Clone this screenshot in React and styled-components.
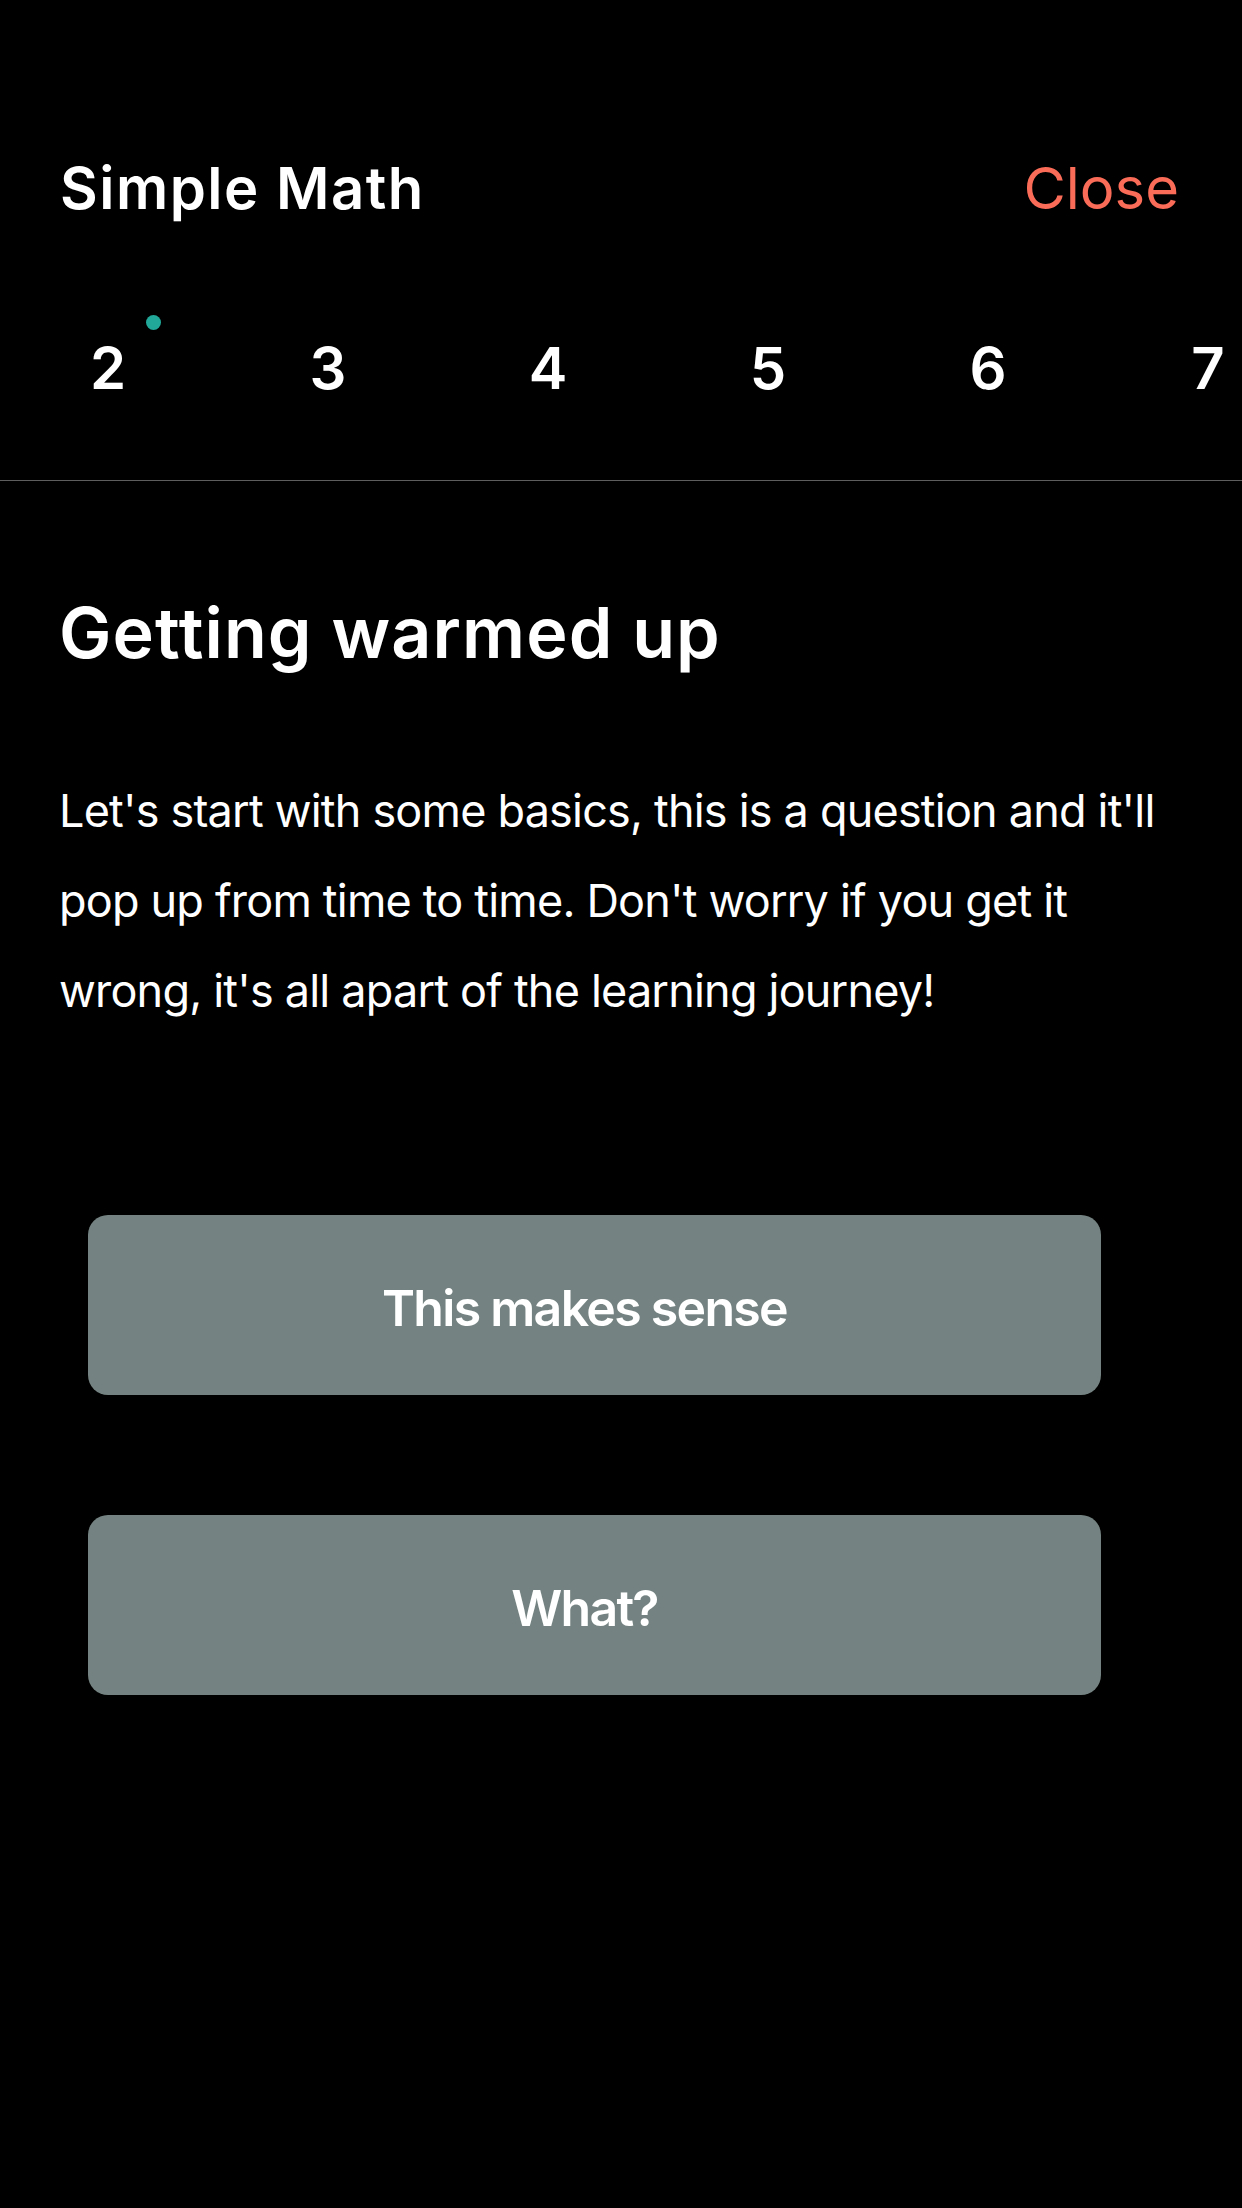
import React from "react";
import styled, { createGlobalStyle } from "styled-components";

const GlobalStyle = createGlobalStyle`
  body {
    margin: 0;
    background-color: #000000;
    font-family: Inter, "Noto Sans", sans-serif;
    color: #ffffff;
  }
`;

const steps = [2, 3, 4, 5, 6, 7];

export default function App() {
  return (
    <>
      <GlobalStyle />
      <Screen>
        <Header>
          <Title>Simple Math</Title>
          <CloseButton>Close</CloseButton>
        </Header>
        <StepRow>
          {steps.map((n, i) => (
            <Step key={n}>
              <StepNumber>
                {n}
                {i === 0 && <Dot />}
              </StepNumber>
            </Step>
          ))}
        </StepRow>
        <Divider />
        <Content>
          <Heading>Getting warmed up</Heading>
          <Body>
            Let's start with some basics, this is a question and it'll pop up
            from time to time. Don't worry if you get it wrong, it's all apart
            of the learning journey!
          </Body>
        </Content>
        <Answers>
          <AnswerButton>This makes sense</AnswerButton>
          <AnswerButton>What?</AnswerButton>
        </Answers>
      </Screen>
    </>
  );
}

const Screen = styled.div`
  width: 1242px;
  min-height: 2208px;
  background-color: #000000;
  overflow: hidden;
`;

const Header = styled.div`
  display: flex;
  flex-direction: row;
  justify-content: space-between;
  align-items: center;
  padding: 153px 63px 0 60px;
  height: 70px;
`;

const Title = styled.div`
  font-size: 58px;
  line-height: 70px;
  font-weight: 600;
  letter-spacing: 1.5px;
`;

const CloseButton = styled.div`
  font-size: 58px;
  line-height: 70px;
  font-weight: 400;
  color: #fb6c58;
`;

const StepRow = styled.div`
  display: flex;
  flex-direction: row;
  margin-top: 110px;
  padding-bottom: 77px;
  margin-left: -2px;
`;

const Step = styled.div`
  flex: 0 0 220px;
  display: flex;
  justify-content: center;
`;

const StepNumber = styled.div`
  position: relative;
  font-size: 58px;
  line-height: 70px;
  font-weight: 600;
`;

const Dot = styled.span`
  position: absolute;
  top: -18px;
  right: -35px;
  width: 15px;
  height: 15px;
  border-radius: 50%;
  background-color: #21a898;
`;

const Divider = styled.div`
  height: 1px;
  background-color: #5e5e5e;
`;

const Content = styled.div`
  padding: 110px 60px 0 59px;
`;

const Heading = styled.h1`
  margin: 0;
  font-size: 70px;
  line-height: 84px;
  font-weight: 600;
  letter-spacing: 1.1px;
`;

const Body = styled.p`
  margin: 91px 0 0 0;
  font-size: 45px;
  line-height: 90px;
  font-weight: 400;
  letter-spacing: -0.8px;
`;

const Answers = styled.div`
  display: flex;
  flex-direction: column;
  gap: 120px;
  padding: 179px 0 0 88px;
`;

const AnswerButton = styled.div`
  width: 1013px;
  height: 180px;
  box-sizing: border-box;
  padding: 6px 20px 0 0;
  display: flex;
  align-items: center;
  justify-content: center;
  border-radius: 20px;
  background-color: #748381;
  font-size: 50px;
  font-weight: 600;
  letter-spacing: -1.7px;
`;
